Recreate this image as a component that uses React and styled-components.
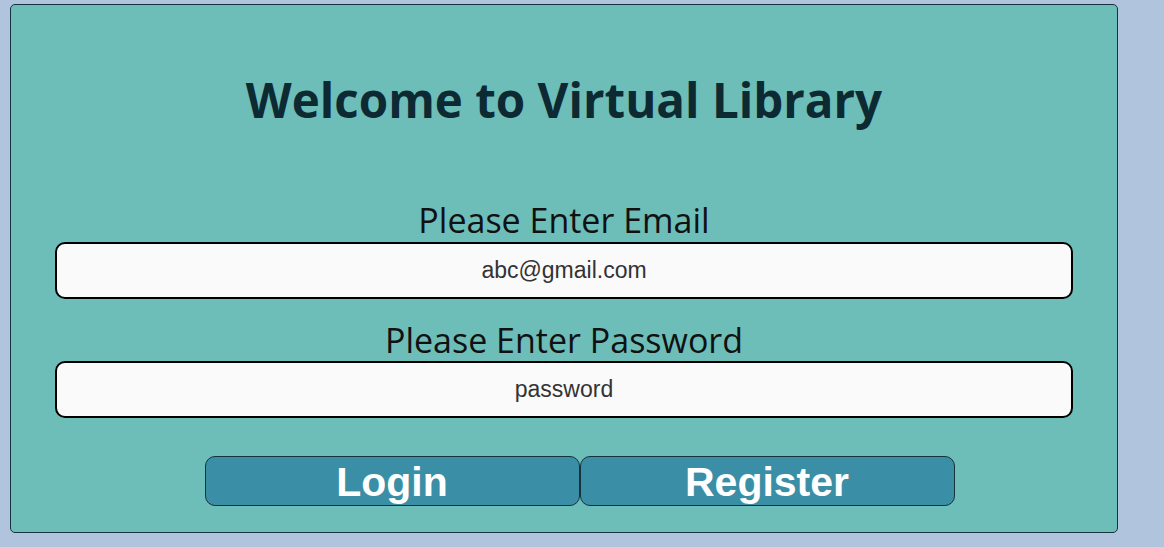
import React, { useState } from "react";
import styled, { createGlobalStyle } from "styled-components";

const GlobalStyle = createGlobalStyle`
  html, body {
    margin: 0;
    padding: 0;
    background-color: #b0c4de;
  }
  * {
    box-sizing: border-box;
  }
`;

function App() {
  const [email, setEmail] = useState("abc@gmail.com");
  const [password, setPassword] = useState("password");

  return (
    <>
      <GlobalStyle />
      <Page>
        <LoginCard>
          <Title>Welcome to Virtual Library</Title>
          <Label htmlFor="email">Please Enter Email</Label>
          <Field
            id="email"
            type="text"
            value={email}
            onChange={(e) => setEmail(e.target.value)}
          />
          <Label htmlFor="password" $gap={21}>
            Please Enter Password
          </Label>
          <Field
            id="password"
            type="text"
            $gap={1}
            value={password}
            onChange={(e) => setPassword(e.target.value)}
          />
          <ButtonRow>
            <ActionButton>Login</ActionButton>
            <ActionButton>Register</ActionButton>
          </ButtonRow>
        </LoginCard>
      </Page>
    </>
  );
}

export default App;

const Page = styled.div`
  min-height: 547px;
  padding: 4px 0 0 10px;
`;

const LoginCard = styled.div`
  width: 1108px;
  height: 529px;
  display: flex;
  flex-direction: column;
  align-items: center;
  background-color: #6dbdb9;
  border: 1px solid #17323b;
  border-radius: 5px;
  font-family: "Open Sans", "Noto Sans", sans-serif;
`;

const Title = styled.h1`
  margin: 67px 0 0;
  font-size: 47.5px;
  line-height: 56px;
  font-weight: 700;
  color: #0d2a33;
`;

const Label = styled.label`
  margin-top: ${(p) => (p.$gap !== undefined ? p.$gap : 72)}px;
  font-size: 34px;
  line-height: 40px;
  color: #111;
`;

const Field = styled.input`
  width: 1018px;
  height: 57px;
  margin-top: ${(p) => (p.$gap !== undefined ? p.$gap : 2)}px;
  padding: 0 12px;
  background-color: #fafafa;
  border: 2px solid #000;
  border-radius: 10px;
  text-align: center;
  font-family: "Liberation Sans", Arial, sans-serif;
  font-size: 23px;
  color: #333;
  outline: none;
`;

const ButtonRow = styled.div`
  display: flex;
  margin-top: 38px;
  padding-left: 31px;
`;

const ActionButton = styled.button`
  width: 375px;
  height: 50px;
  padding: 2px 0 0;
  background-color: #3a8fa6;
  border: 1px solid #17323b;
  border-radius: 10px;
  color: #fff;
  font-family: "Liberation Sans", Arial, sans-serif;
  font-size: 41px;
  font-weight: 700;
  line-height: 46px;
  cursor: pointer;
`;
